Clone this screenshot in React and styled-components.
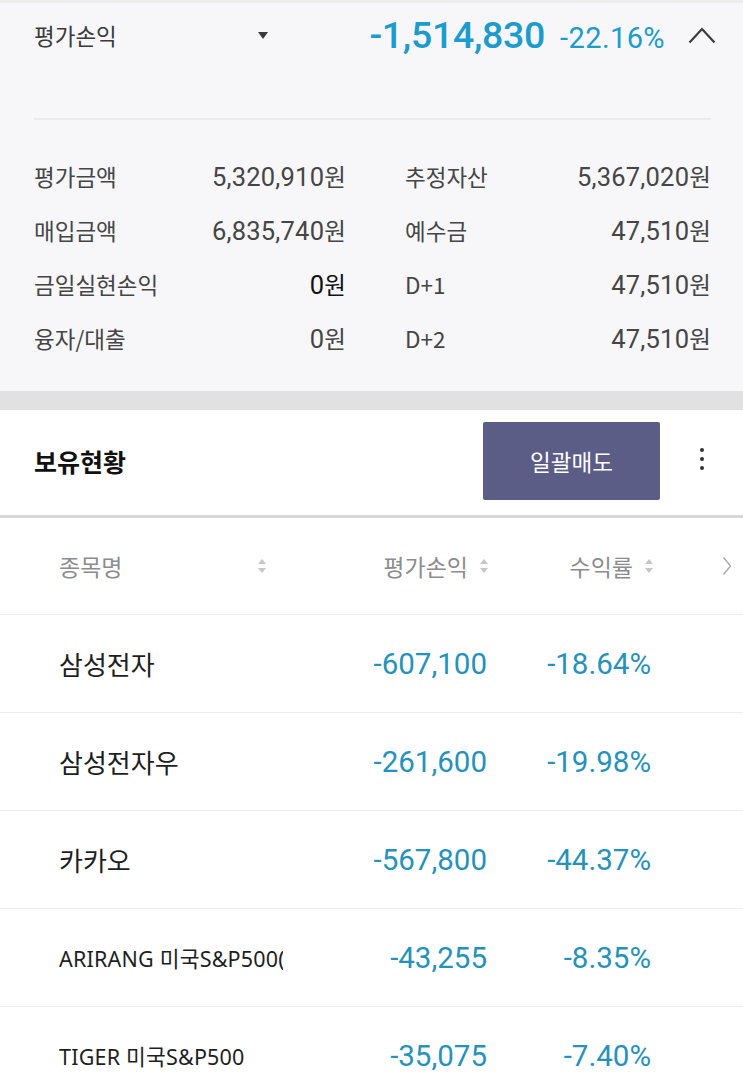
import React from 'react'
import styled, { createGlobalStyle } from 'styled-components'

const GlobalStyle = createGlobalStyle`
  body {
    margin: 0;
    background: #fff;
    font-family: Roboto, "Noto Sans CJK KR", sans-serif;
  }
`

const Page = styled.div`
  width: 743px;
  overflow: hidden;
`

const Summary = styled.section`
  background: #f7f7f9;
  border-top: 3px solid #ececed;
  padding: 0 32px 26px 34px;
`

const TopRow = styled.div`
  height: 63px;
  display: flex;
  align-items: center;
`

const TopLabel = styled.div`
  font-family: "Noto Sans CJK KR", sans-serif;
  font-size: 22.5px;
  color: #3a3a3a;
  width: 224px;
`

const Caret = styled.span`
  width: 0;
  height: 0;
  border-left: 5px solid transparent;
  border-right: 5px solid transparent;
  border-top: 7px solid #3a3a3a;
  margin-top: 2px;
`

const TopValue = styled.div`
  margin-left: auto;
  display: flex;
  align-items: baseline;
  gap: 15px;
  color: #1b9ccc;
  font-family: Roboto, sans-serif;
`

const Amount = styled.span`
  font-size: 37.5px;
  font-weight: 500;
  letter-spacing: -0.3px;
`

const Rate = styled.span`
  font-size: 29px;
  letter-spacing: 0.4px;
`

const Toggle = styled.div`
  width: 28px;
  margin-left: 23px;
  margin-right: -5px;
  display: flex;
  align-items: center;
`

const Rule = styled.hr`
  margin: 52px 0 0;
  border: none;
  height: 2px;
  background: #ebebee;
`

const Grid = styled.div`
  display: grid;
  grid-template-columns: 312px 306px;
  column-gap: 59px;
  padding-top: 29px;
`

const Pair = styled.div`
  height: 54px;
  display: flex;
  align-items: center;
  justify-content: space-between;
`

const Label = styled.span`
  font-family: "Noto Sans CJK KR", sans-serif;
  font-size: 22.5px;
  color: #454545;
`

const Value = styled.span`
  font-family: Roboto, "Noto Sans CJK KR", sans-serif;
  font-size: 25.5px;
  letter-spacing: 0.2px;
  color: ${p => (p.strong ? '#111' : '#454545')};
`

const Won = styled.span`
  font-family: "Noto Sans CJK KR", sans-serif;
  font-size: 23.5px;
`

const Band = styled.div`
  height: 19px;
  background: #e1e1e2;
`

const HoldBar = styled.div`
  height: 105px;
  display: flex;
  align-items: center;
  padding-left: 34px;
  border-bottom: 3px solid #d6d6d8;
`

const HoldTitle = styled.h2`
  margin: 0 0 4px;
  font-family: "Noto Sans CJK KR", sans-serif;
  font-size: 25px;
  font-weight: 700;
  color: #111;
`

const SellButton = styled.button`
  margin-left: auto;
  width: 177px;
  height: 78px;
  border: none;
  border-radius: 2px;
  background: #5b5d86;
  color: #fff;
  font-family: "Noto Sans CJK KR", sans-serif;
  font-size: 22.5px;
  margin-bottom: 4px;
`

const Kebab = styled.div`
  width: 83px;
  display: flex;
  flex-direction: column;
  align-items: center;
  gap: 5px;
  margin-bottom: 8px;

  span {
    width: 4px;
    height: 4px;
    border-radius: 50%;
    background: #333;
  }
`

const TableRow = styled.div`
  display: grid;
  grid-template-columns: 224px 206px 165px 1fr;
  align-items: center;
  padding-left: 59px;
  height: ${p => (p.head ? '96px' : '97px')};
  border-bottom: 1px solid #efeff1;
`

const HeadCell = styled.div`
  display: flex;
  align-items: center;
  justify-content: ${p => (p.spread ? 'space-between' : 'flex-end')};
  gap: 11px;
  padding-right: ${p => (p.spread ? '16px' : '0')};
  font-family: "Noto Sans CJK KR", sans-serif;
  font-size: 23px;
  color: #8c8c8c;
`

const More = styled.div`
  display: flex;
  justify-content: flex-end;
  padding-right: 11px;
`

const Name = styled.div`
  font-family: ${p => (p.small ? '"Noto Sans", "Noto Sans CJK KR", sans-serif' : '"Noto Sans CJK KR", sans-serif')};
  font-size: ${p => (p.small ? '21.5px' : '26px')};
  letter-spacing: ${p => (p.small ? '0.2px' : '0')};
  color: #1e1e1e;
  white-space: nowrap;
  overflow: hidden;
`

const Num = styled.div`
  text-align: right;
  font-family: Roboto, sans-serif;
  font-size: 29.5px;
  color: #2592bb;
  padding-right: ${p => p.pad || 0};
`

function SortIcon() {
  return (
    <svg width="10" height="18" viewBox="0 0 10 18">
      <path d="M1 7 L5 2 L9 7 Z" fill="#c6c6c8" />
      <path d="M1 11 L5 16 L9 11 Z" fill="#c6c6c8" />
    </svg>
  )
}

const summary = [
  ['평가금액', '5,320,910', '추정자산', '5,367,020'],
  ['매입금액', '6,835,740', '예수금', '47,510'],
  ['금일실현손익', '0', 'D+1', '47,510'],
  ['융자/대출', '0', 'D+2', '47,510'],
]

const holdings = [
  { name: '삼성전자', pl: '-607,100', rate: '-18.64%' },
  { name: '삼성전자우', pl: '-261,600', rate: '-19.98%' },
  { name: '카카오', pl: '-567,800', rate: '-44.37%' },
  { name: 'ARIRANG 미국S&P500(H)', pl: '-43,255', rate: '-8.35%', small: true },
  { name: 'TIGER 미국S&P500', pl: '-35,075', rate: '-7.40%', small: true },
]

export default function App() {
  return (
    <Page>
      <GlobalStyle />
      <Summary>
        <TopRow>
          <TopLabel>평가손익</TopLabel>
          <Caret />
          <TopValue>
            <Amount>-1,514,830</Amount>
            <Rate>-22.16%</Rate>
          </TopValue>
          <Toggle>
            <svg width="28" height="18" viewBox="0 0 28 18">
              <path d="M1.5 16.5 L14 3 L26.5 16.5" fill="none" stroke="#3a3a3a" strokeWidth="2.2" />
            </svg>
          </Toggle>
        </TopRow>
        <Rule />
        <Grid>
          {summary.map(([l1, v1, l2, v2], i) => (
            <React.Fragment key={l1}>
              <Pair>
                <Label>{l1}</Label>
                <Value strong={i === 2}>{v1}<Won>원</Won></Value>
              </Pair>
              <Pair>
                <Label>{l2}</Label>
                <Value>{v2}<Won>원</Won></Value>
              </Pair>
            </React.Fragment>
          ))}
        </Grid>
      </Summary>
      <Band />
      <HoldBar>
        <HoldTitle>보유현황</HoldTitle>
        <SellButton>일괄매도</SellButton>
        <Kebab><span /><span /><span /></Kebab>
      </HoldBar>
      <TableRow head>
        <HeadCell spread>종목명<SortIcon /></HeadCell>
        <HeadCell>평가손익<SortIcon /></HeadCell>
        <HeadCell>수익률<SortIcon /></HeadCell>
        <More>
          <svg width="10" height="20" viewBox="0 0 10 20">
            <path d="M1.5 1.5 L8.5 10 L1.5 18.5" fill="none" stroke="#a8a8a8" strokeWidth="1.4" />
          </svg>
        </More>
      </TableRow>
      {holdings.map(h => (
        <TableRow key={h.name}>
          <Name small={h.small}>{h.name}</Name>
          <Num pad="2px">{h.pl}</Num>
          <Num pad="3px">{h.rate}</Num>
          <div />
        </TableRow>
      ))}
    </Page>
  )
}
